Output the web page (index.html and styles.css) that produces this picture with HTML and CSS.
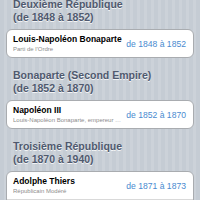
FILE: index.html
```html
<!DOCTYPE html>
<html>
<head>
<meta charset="utf-8">
<link rel="stylesheet" href="styles.css">
</head>
<body>
<div class="list">
  <section class="section first">
    <h2 class="header">Deuxième République<br>(de 1848 à 1852)</h2>
    <div class="card">
      <div class="row">
        <div class="texts">
          <div class="title">Louis-Napoléon Bonaparte</div>
          <div class="subtitle">Parti de l'Ordre</div>
        </div>
        <div class="detail">de 1848 à 1852</div>
      </div>
    </div>
  </section>
  <section class="section">
    <h2 class="header">Bonaparte (Second Empire)<br>(de 1852 à 1870)</h2>
    <div class="card">
      <div class="row">
        <div class="texts">
          <div class="title">Napoléon III</div>
          <div class="subtitle">Louis-Napoléon Bonaparte, empereur des Français</div>
        </div>
        <div class="detail">de 1852 à 1870</div>
      </div>
    </div>
  </section>
  <section class="section">
    <h2 class="header">Troisième République<br>(de 1870 à 1940)</h2>
    <div class="card">
      <div class="row">
        <div class="texts">
          <div class="title">Adolphe Thiers</div>
          <div class="subtitle">Républicain Modéré</div>
        </div>
        <div class="detail">de 1871 à 1873</div>
      </div>
      <div class="row"></div>
    </div>
  </section>
</div>
</body>
</html>
```
FILE: styles.css
```css
html, body {
  margin: 0;
  padding: 0;
}
body {
  width: 200px;
  height: 200px;
  overflow: hidden;
  font-family: "Liberation Sans", Arial, sans-serif;
  background: repeating-linear-gradient(90deg, #c5ccd4 0 4px, #ccd2d9 4px 7px);
}
.list {
  margin-top: -2px;
}
.section {
  padding-top: 11px;
}
.section.first {
  padding-top: 0;
}
.header {
  margin: 0 13px 5px;
  font-size: 10.5px;
  line-height: 13px;
  font-weight: bold;
  color: #4f596e;
  text-shadow: 0 1px 0 rgba(255, 255, 255, 0.8);
}
.card {
  margin: 0 6px;
  background: #fff;
  border: 1px solid #a9acb0;
  border-radius: 6px;
}
.row {
  display: flex;
  align-items: center;
  height: 27px;
  padding: 0 7px 0 6px;
  gap: 4px;
}
.row + .row {
  border-top: 1px solid #d9d9d9;
}
.texts {
  flex: 1;
  min-width: 0;
}
.title {
  font-size: 8.5px;
  line-height: 10px;
  font-weight: bold;
  color: #000;
  white-space: nowrap;
}
.subtitle {
  margin-top: 2px;
  font-size: 6px;
  line-height: 7px;
  color: #8c8c8c;
  white-space: nowrap;
  overflow: hidden;
  text-overflow: ellipsis;
}
.detail {
  font-size: 8.6px;
  color: #4a8bd0;
  white-space: nowrap;
}
```
